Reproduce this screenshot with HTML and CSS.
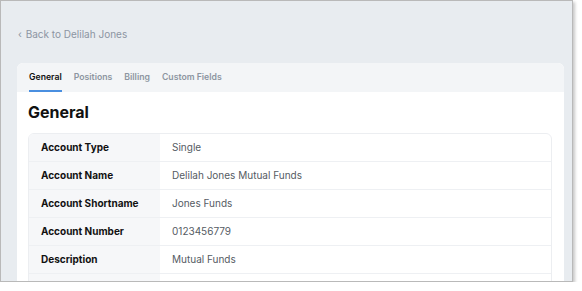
FILE: index.html
```html
<!DOCTYPE html>
<html lang="en">
<head>
  <meta charset="UTF-8">
  <title>Account - General</title>
  <link rel="stylesheet" href="styles.css">
</head>
<body>
  <!-- Browser frame -->
  <div class="frame">
    <a class="back-link" href="#"><span class="chevron">&lsaquo;</span> Back to Delilah Jones</a>

    <!-- Account card -->
    <div class="card">
      <div class="tabs">
        <span class="tab active">General</span>
        <span class="tab">Positions</span>
        <span class="tab">Billing</span>
        <span class="tab">Custom Fields</span>
      </div>
      <div class="card-body">
        <h2>General</h2>
        <div class="details">
          <div class="row"><div class="label">Account Type</div><div class="value">Single</div></div>
          <div class="row"><div class="label">Account Name</div><div class="value">Delilah Jones Mutual Funds</div></div>
          <div class="row"><div class="label">Account Shortname</div><div class="value">Jones Funds</div></div>
          <div class="row"><div class="label">Account Number</div><div class="value">0123456779</div></div>
          <div class="row"><div class="label">Description</div><div class="value">Mutual Funds</div></div>
          <div class="row"><div class="label">&nbsp;</div><div class="value">&nbsp;</div></div>
        </div>
      </div>
    </div>
  </div>
</body>
</html>
```

FILE: styles.css
```css
/* Global Settings */
* { margin: 0; padding: 0; box-sizing: border-box; }
body {
  background: white;
  font-family: Inter, 'Noto Sans', sans-serif;
  color: #111;
}

/* ----------------- Frame ----------------- */
.frame {
  width: 573px;
  height: 282px;
  border: 1px solid #b9b9b9;
  background: #e8ecf0;
  box-shadow: 2px 2px 3px rgba(0,0,0,0.22);
  padding: 25px 8px 0 16px;
  overflow: hidden;
  display: flex;
  flex-direction: column;
}

.back-link {
  display: block;
  font-size: 10px;
  line-height: 16px;
  color: #8c95a2;
  text-decoration: none;
  margin-bottom: 21px;
  padding-left: 1px;
}
.chevron { margin-right: 1px; }

/* ----------------- Card ----------------- */
.card {
  background: white;
  border-radius: 6px 6px 0 0;
  flex: 1;
  overflow: hidden;
}
.tabs {
  display: flex;
  gap: 12px;
  background: #f3f5f7;
  height: 29px;
  padding: 1px 12px 0;
}
.tab {
  font-size: 8.7px;
  font-weight: 600;
  color: #8d95a1;
  line-height: 26px;
  border-bottom: 2px solid transparent;
}
.tab.active {
  color: #111;
  border-bottom-color: #4a8fe0;
}

.card-body { padding: 10px 12px 0 11px; }
.card-body h2 {
  font-size: 16px;
  line-height: 20px;
  font-weight: 700;
  margin-bottom: 11px;
}

/* ----------------- Details table ----------------- */
.details {
  border: 1px solid #eceef1;
  border-radius: 6px;
  overflow: hidden;
}
.row {
  display: flex;
  height: 28px;
  border-bottom: 1px solid #eef0f3;
  font-size: 10px;
  line-height: 27px;
}
.label {
  width: 131px;
  background: #f6f7f9;
  font-weight: 700;
  padding-left: 12px;
}
.value {
  flex: 1;
  color: #555b63;
  padding-left: 12px;
}
```
